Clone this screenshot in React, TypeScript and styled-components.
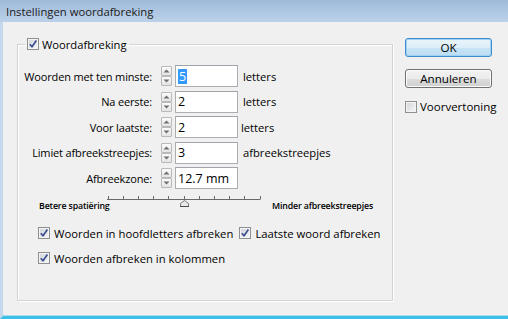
import React from "react";
import styled, { createGlobalStyle } from "styled-components";

const GlobalStyle = createGlobalStyle`
  html, body { margin: 0; padding: 0; background: #f0f0f0; }
  body { font-family: "Open Sans", "Noto Sans", sans-serif; color: #000; }
  * { box-sizing: border-box; }
`;

const Window = styled.div`
  width: 508px;
  height: 319px;
  display: flex;
  flex-direction: column;
  background: #f0f0f0;
  overflow: hidden;
`;

const TitleBar = styled.div`
  height: 22px;
  flex: none;
  display: flex;
  align-items: center;
  padding-left: 6px;
  background: linear-gradient(#9fbad9, #bcd1e9);
  font-size: 11.3px;
  color: #1b1b1b;
`;

const Body = styled.div`
  flex: 1;
  display: flex;
  align-items: flex-start;
  border-left: 3px solid #c6d8ee;
  border-bottom: 3px solid #3ebfe4;
  box-shadow: inset 0 -1px 0 #a8def0;
  padding: 14px 0 0 14px;
  background: #f0f0f0;
`;

const GroupBox = styled.fieldset`
  margin: 0;
  padding: 0;
  width: 376px;
  height: 265px;
  border: 1px solid #d3d3d3;
  box-shadow: 1px 1px 0 #ffffff, inset 1px 1px 0 #ffffff;
  min-width: 0;
`;

const Legend = styled.legend`
  margin-left: 7px;
  padding: 0 2px;
  height: 16px;
  display: flex;
  align-items: center;
  gap: 3px;
  font-size: 11.2px;
`;

const Form = styled.div`
  display: flex;
  flex-direction: column;
  padding-top: 13px;
`;

const FieldRow = styled.div`
  display: flex;
  align-items: center;
  height: 22px;
  & + & {
    margin-top: 3.5px;
  }
`;

const FieldLabel = styled.span`
  width: 134px;
  margin-right: 9px;
  text-align: right;
  font-size: 11px;
  letter-spacing: -0.15px;
  white-space: nowrap;
`;

const Spinner = styled.div`
  width: 11px;
  height: 20px;
  margin-right: 3px;
  display: flex;
  flex-direction: column;
`;

const SpinButton = styled.div`
  flex: 1;
  border: 1px solid #b9b9b9;
  border-radius: 1px;
  background: linear-gradient(#fbfbfb, #e4e4e4);
  display: flex;
  align-items: center;
  justify-content: center;
`;

const Input = styled.div`
  width: 63px;
  height: 22px;
  border: 1px solid #abadb3;
  border-top-color: #a0a3aa;
  background: #fff;
  display: flex;
  align-items: center;
  padding-left: 2px;
  font-size: 12.5px;
`;

const Selected = styled.span`
  background: #3399ff;
  color: #fff;
  padding: 0 1px;
  line-height: 15px;
`;

const Unit = styled.span<{ $shift?: number }>`
  margin-left: ${(p) => 5 - (p.$shift ?? 0)}px;
  font-size: 11.2px;
`;

const SliderRow = styled.div`
  display: flex;
  align-items: flex-start;
  margin-top: 6px;
  height: 16px;
`;

const SliderLabel = styled.span<{ $left?: boolean }>`
  font-size: 8.8px;
  font-weight: 600;
  letter-spacing: -0.15px;
  margin-top: 5px;
  white-space: nowrap;
  ${(p) => (p.$left ? `padding-left: 21px; width: 89px;` : `margin-left: 11px;`)}
`;

const CheckGroup = styled.div`
  display: flex;
  flex-direction: column;
  margin-top: 14px;
  padding-left: 20px;
`;

const CheckRow = styled.div`
  display: flex;
  align-items: center;
  height: 16px;
  & + & {
    margin-top: 9px;
  }
`;

const CheckItem = styled.label<{ $gapBefore?: number }>`
  display: flex;
  align-items: center;
  gap: 4px;
  font-size: 11.3px;
  white-space: nowrap;
  margin-left: ${(p) => p.$gapBefore ?? 0}px;
`;

const Box = styled.span`
  width: 12px;
  height: 12px;
  flex: none;
  border: 1px solid #8e8f8f;
  background: linear-gradient(135deg, #cfd3d9, #f7f7f7);
  box-shadow: inset 0 0 0 1px #f4f4f4;
  display: flex;
  align-items: center;
  justify-content: center;
`;

const SideColumn = styled.div`
  display: flex;
  flex-direction: column;
  margin-left: 12px;
  margin-top: 2px;
  width: 87px;
`;

const Button = styled.button<{ $default?: boolean }>`
  width: 87px;
  height: 19px;
  padding: 0;
  font-family: inherit;
  font-size: 11.6px;
  color: #000;
  border-radius: 3px;
  border: 1px solid ${(p) => (p.$default ? "#3c8ccf" : "#707070")};
  background: ${(p) =>
    p.$default
      ? "linear-gradient(#eaf5fc 0%, #dceef9 50%, #c9e5f7 51%, #bcdcf2 100%)"
      : "linear-gradient(#f2f2f2 0%, #ebebeb 50%, #dddddd 51%, #cfcfcf 100%)"};
  box-shadow: inset 0 0 0 1px ${(p) => (p.$default ? "#9fd3f3" : "#fcfcfc")};
  & + & {
    margin-top: 12px;
  }
`;

const SideCheck = styled(CheckItem)`
  margin-top: 11px;
  gap: 3px;
  font-size: 11.5px;
`;

const Arrow = ({ up }: { up?: boolean }) => (
  <svg width="7" height="4" viewBox="0 0 7 4">
    <path
      d={up ? "M0.5 3.5 L3.5 0.5 L6.5 3.5 Z" : "M0.5 0.5 L3.5 3.5 L6.5 0.5 Z"}
      fill="#6e6e6e"
    />
  </svg>
);

const CheckBox = ({ checked }: { checked?: boolean }) => (
  <Box>
    {checked && (
      <svg width="10" height="10" viewBox="0 0 10 10">
        <path
          d="M1.8 5.2 L4 7.8 L8.4 1.6"
          fill="none"
          stroke="#3b4f8f"
          strokeWidth="1.7"
          strokeLinejoin="round"
        />
      </svg>
    )}
  </Box>
);

const SpinField = ({ children }: { children: React.ReactNode }) => (
  <>
    <Spinner>
      <SpinButton>
        <Arrow up />
      </SpinButton>
      <SpinButton>
        <Arrow />
      </SpinButton>
    </Spinner>
    <Input>{children}</Input>
  </>
);

const Track = () => {
  const ticks = Array.from({ length: 11 }, (_, i) => 0.5 + i * 15.2);
  return (
    <svg width="154" height="14" viewBox="0 0 154 14">
      <line x1="0" y1="4.5" x2="153" y2="4.5" stroke="#6a6a6a" strokeWidth="1" />
      {ticks.map((x) => (
        <line
          key={x}
          x1={Math.round(x) + 0.5}
          y1="1"
          x2={Math.round(x) + 0.5}
          y2="4.5"
          stroke="#6a6a6a"
          strokeWidth="1"
        />
      ))}
      <path d="M73.5 11.5 L73.5 8.5 L77.5 5.5 L81.5 8.5 L81.5 11.5 Z" fill="#e8e8e8" stroke="#7a7a7a" />
      <line x1="73" y1="11.5" x2="82" y2="11.5" stroke="#4a4a4a" />
    </svg>
  );
};

const rows = [
  { label: "Woorden met ten minste:", value: "5", unit: "letters", selected: true },
  { label: "Na eerste:", value: "2", unit: "letters" },
  { label: "Voor laatste:", value: "2", unit: "letters", shift: 2 },
  { label: "Limiet afbreekstreepjes:", value: "3", unit: "afbreekstreepjes" },
  { label: "Afbreekzone:", value: "12.7 mm", unit: "" },
];

export default function App() {
  return (
    <>
      <GlobalStyle />
      <Window>
        <TitleBar>Instellingen woordafbreking</TitleBar>
        <Body>
          <GroupBox>
            <Legend>
              <CheckBox checked />
              Woordafbreking
            </Legend>
            <Form>
              {rows.map((r) => (
                <FieldRow key={r.label}>
                  <FieldLabel>{r.label}</FieldLabel>
                  <SpinField>
                    {r.selected ? <Selected>{r.value}</Selected> : r.value}
                  </SpinField>
                  {r.unit && <Unit $shift={r.shift}>{r.unit}</Unit>}
                </FieldRow>
              ))}
            </Form>
            <SliderRow>
              <SliderLabel $left>Betere spatiëring</SliderLabel>
              <Track />
              <SliderLabel>Minder afbreekstreepjes</SliderLabel>
            </SliderRow>
            <CheckGroup>
              <CheckRow>
                <CheckItem>
                  <CheckBox checked />
                  Woorden in hoofdletters afbreken
                </CheckItem>
                <CheckItem $gapBefore={6}>
                  <CheckBox checked />
                  Laatste woord afbreken
                </CheckItem>
              </CheckRow>
              <CheckRow>
                <CheckItem>
                  <CheckBox checked />
                  Woorden afbreken in kolommen
                </CheckItem>
              </CheckRow>
            </CheckGroup>
          </GroupBox>
          <SideColumn>
            <Button $default>OK</Button>
            <Button>Annuleren</Button>
            <SideCheck>
              <CheckBox />
              Voorvertoning
            </SideCheck>
          </SideColumn>
        </Body>
      </Window>
    </>
  );
}
